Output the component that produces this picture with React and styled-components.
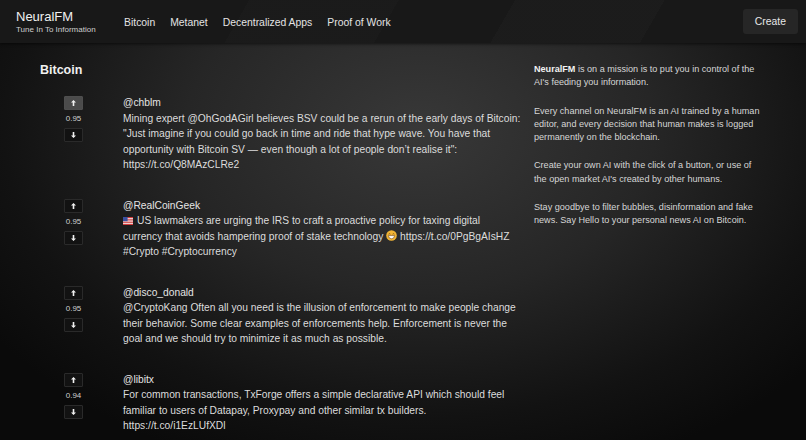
import React from 'react';
import styled, { createGlobalStyle } from 'styled-components';

const GlobalStyle = createGlobalStyle`
  html, body {
    margin: 0;
    padding: 0;
    background: #0b0b0b;
    font-family: "Liberation Sans", Arial, sans-serif;
    color: #dedede;
  }
  * { box-sizing: border-box; }
`;

const Page = styled.div`
  width: 806px;
  height: 440px;
  overflow: hidden;
  display: flex;
  flex-direction: column;
  background: radial-gradient(ellipse 520px 360px at 420px 130px, #383838 0%, #262626 45%, #121212 80%, #0a0a0a 100%);
`;

const HeaderBar = styled.header`
  height: 43px;
  flex-shrink: 0;
  display: flex;
  align-items: center;
  padding: 0 8px 0 16px;
  background:
    linear-gradient(120deg, transparent 0%, transparent 30%, rgba(255,255,255,0.012) 30%, rgba(255,255,255,0.012) 48%, transparent 48%, transparent 62%, rgba(255,255,255,0.015) 62%, rgba(255,255,255,0.015) 80%, transparent 80%),
    #181818;
  box-shadow: 0 1px 3px rgba(0, 0, 0, 0.6);
`;

const Brand = styled.div`
  display: flex;
  flex-direction: column;
  width: 108px;
`;

const BrandName = styled.span`
  font-size: 13px;
  font-weight: 500;
  color: #f0f0f0;
  line-height: 15px;
`;

const Tagline = styled.span`
  font-size: 8px;
  color: #cfcfcf;
  line-height: 11px;
`;

const NavLinks = styled.nav`
  display: flex;
  gap: 15px;
  margin-top: 1px;
`;

const NavLink = styled.a`
  font-size: 10.4px;
  color: #e4e4e4;
  text-decoration: none;
`;

const CreateButton = styled.button`
  margin-left: auto;
  height: 25px;
  padding: 0 12px;
  border: none;
  border-radius: 3px;
  background: #262626;
  color: #e6e6e6;
  font-family: inherit;
  font-size: 10.4px;
`;

const Main = styled.main`
  flex: 1;
  display: flex;
  padding: 19px 0 0 40px;
`;

const Feed = styled.section`
  width: 494px;
`;

const Title = styled.h2`
  margin: 0 0 17px;
  font-size: 12.5px;
  font-weight: 700;
  line-height: 16px;
  color: #f0f0f0;
`;

const Post = styled.article`
  display: flex;
  align-items: flex-start;
  margin-bottom: 25px;
`;

const Votes = styled.div`
  width: 83px;
  display: flex;
  flex-direction: column;
  align-items: center;
  gap: 3px;
  padding: 1px 16px 0 0;
`;

const VoteButton = styled.button`
  width: 19px;
  height: 14px;
  padding: 0;
  display: flex;
  align-items: center;
  justify-content: center;
  border: 1px solid ${p => (p.$active ? '#4e4e4e' : '#2a2a2a')};
  background: ${p => (p.$active ? '#4b4b4b' : '#121212')};
  border-radius: 1px;
`;

const Score = styled.span`
  font-size: 8px;
  color: #cfcfcf;
  line-height: 12px;
`;

const Body = styled.div`
  width: 398.3px;
  font-size: 10.25px;
  line-height: 15.5px;
  color: #dcdcdc;
`;

const Handle = styled.div`
  color: #e4e4e4;
`;

const Sidebar = styled.aside`
  width: 230px;
  padding-top: 1px;
`;

const Para = styled.p`
  margin: 0 0 15px;
  font-size: 9.1px;
  line-height: 13.3px;
  color: #d6d6d6;
  strong { font-weight: 700; color: #f2f2f2; }
`;

const Arrow = ({ down }) => (
  <svg width="5" height="6" viewBox="0 0 5 6" style={down ? { transform: 'rotate(180deg)' } : undefined}>
    <path d="M2.5 0 L5 2.6 H3.3 V6 H1.7 V2.6 H0 Z" fill="#f2f2f2" />
  </svg>
);

const Flag = () => (
  <svg width="10" height="8" viewBox="0 0 10 8" style={{ verticalAlign: '-0.5px', marginRight: 4 }}>
    <rect width="10" height="8" rx="1" fill="#f4f4f4" />
    <rect y="0" width="10" height="1.2" fill="#d23a3a" />
    <rect y="2.3" width="10" height="1.2" fill="#d23a3a" />
    <rect y="4.6" width="10" height="1.2" fill="#d23a3a" />
    <rect y="6.8" width="10" height="1.2" fill="#d23a3a" />
    <rect width="4.6" height="4.2" fill="#3a4fa0" />
  </svg>
);

const Grin = () => (
  <svg width="11" height="11" viewBox="0 0 11 11" style={{ verticalAlign: '-1.5px' }}>
    <circle cx="5.5" cy="5.5" r="5.3" fill="#f2b535" />
    <path d="M2.6 4.2 Q3.5 3.2 4.4 4.2" stroke="#6b4210" strokeWidth="0.8" fill="none" />
    <path d="M6.6 4.2 Q7.5 3.2 8.4 4.2" stroke="#6b4210" strokeWidth="0.8" fill="none" />
    <path d="M2.3 5.6 H8.7 Q8.3 8.7 5.5 8.8 Q2.7 8.7 2.3 5.6 Z" fill="#fff" stroke="#6b4210" strokeWidth="0.6" />
  </svg>
);

const posts = [
  {
    handle: '@chblm',
    score: '0.95',
    active: true,
    text: 'Mining expert @OhGodAGirl believes BSV could be a rerun of the early days of Bitcoin: "Just imagine if you could go back in time and ride that hype wave. You have that opportunity with Bitcoin SV \u2014 even though a lot of people don\u2019t realise it": https://t.co/Q8MAzCLRe2',
  },
  {
    handle: '@RealCoinGeek',
    score: '0.95',
    text: (
      <>
        <Flag />US lawmakers are urging the IRS to craft a proactive policy for taxing digital currency that avoids hampering proof of stake technology <Grin /> https://t.co/0PgBgAIsHZ #Crypto #Cryptocurrency
      </>
    ),
  },
  {
    handle: '@disco_donald',
    score: '0.95',
    text: '@CryptoKang Often all you need is the illusion of enforcement to make people change their behavior. Some clear examples of enforcements help. Enforcement is never the goal and we should try to minimize it as much as possible.',
  },
  {
    handle: '@libitx',
    score: '0.94',
    text: 'For common transactions, TxForge offers a simple declarative API which should feel familiar to users of Datapay, Proxypay and other similar tx builders. https://t.co/i1EzLUfXDl',
  },
];

export default function App() {
  return (
    <Page>
      <GlobalStyle />
      <HeaderBar>
        <Brand>
          <BrandName>NeuralFM</BrandName>
          <Tagline>Tune In To Information</Tagline>
        </Brand>
        <NavLinks>
          <NavLink href="#">Bitcoin</NavLink>
          <NavLink href="#">Metanet</NavLink>
          <NavLink href="#">Decentralized Apps</NavLink>
          <NavLink href="#">Proof of Work</NavLink>
        </NavLinks>
        <CreateButton>Create</CreateButton>
      </HeaderBar>
      <Main>
        <Feed>
          <Title>Bitcoin</Title>
          {posts.map(post => (
            <Post key={post.handle}>
              <Votes>
                <VoteButton $active={post.active}><Arrow /></VoteButton>
                <Score>{post.score}</Score>
                <VoteButton><Arrow down /></VoteButton>
              </Votes>
              <Body>
                <Handle>{post.handle}</Handle>
                <div>{post.text}</div>
              </Body>
            </Post>
          ))}
        </Feed>
        <Sidebar>
          <Para><strong>NeuralFM</strong> is on a mission is to put you in control of the AI's feeding you information.</Para>
          <Para>Every channel on NeuralFM is an AI trained by a human editor, and every decision that human makes is logged permanently on the blockchain.</Para>
          <Para>Create your own AI with the click of a button, or use of the open market AI's created by other humans.</Para>
          <Para>Stay goodbye to filter bubbles, disinformation and fake news. Say Hello to your personal news AI on Bitcoin.</Para>
        </Sidebar>
      </Main>
    </Page>
  );
}
